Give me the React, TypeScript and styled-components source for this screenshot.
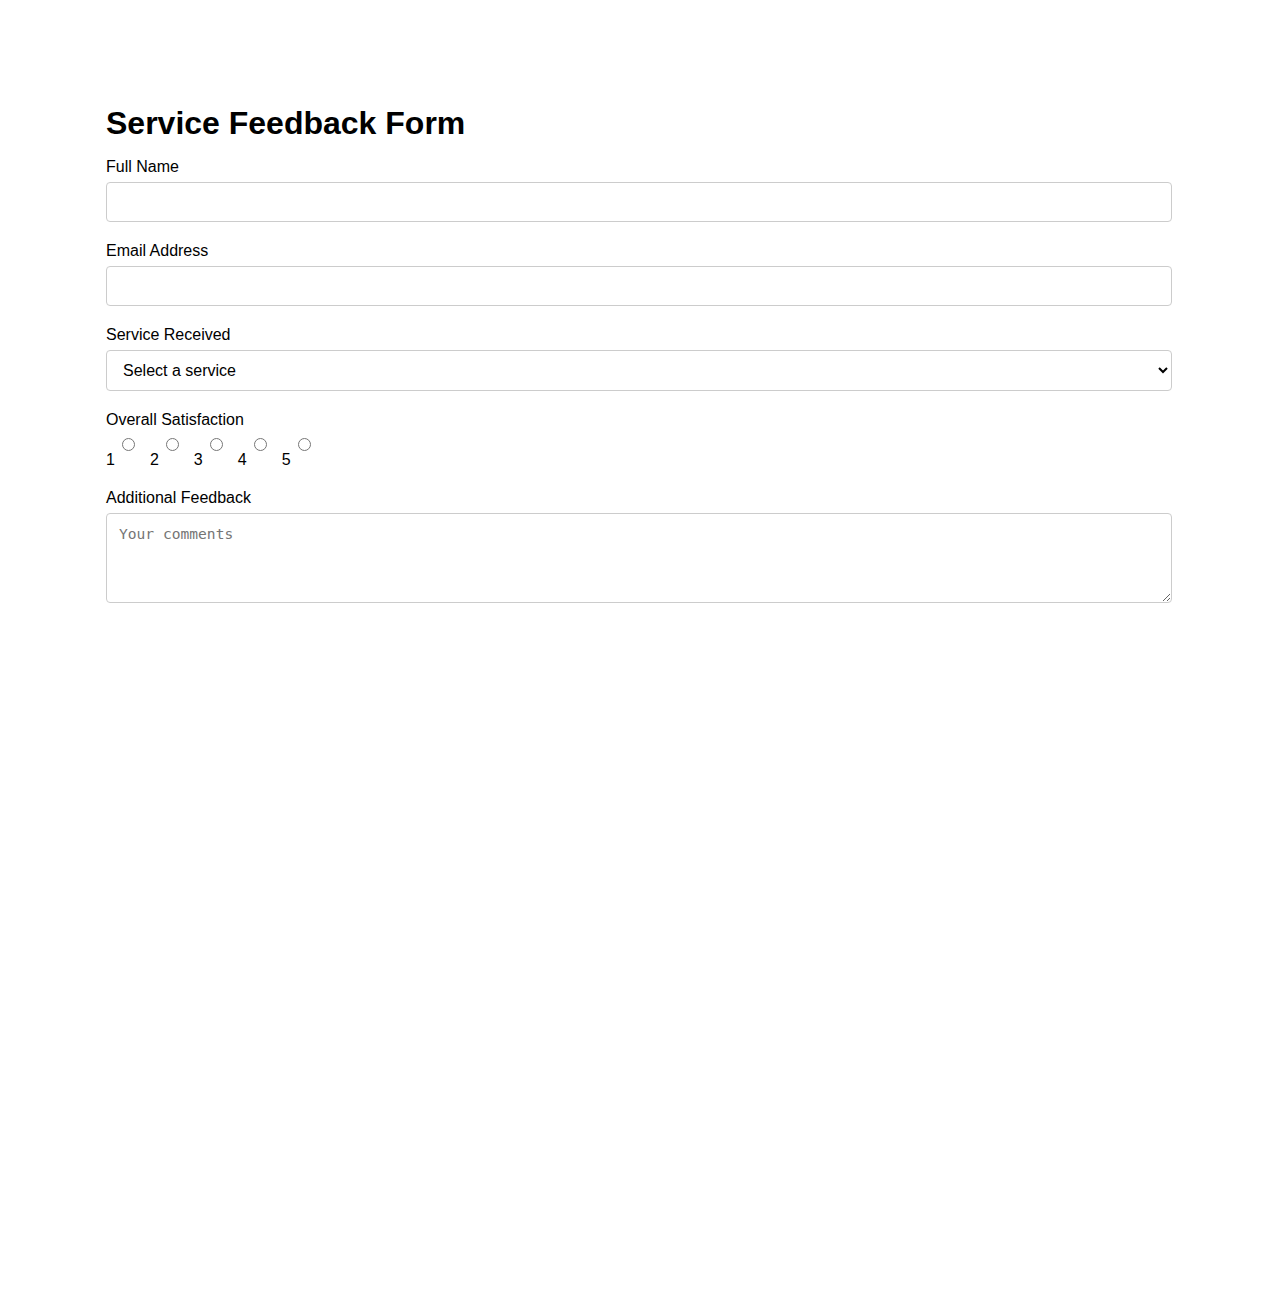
import React, { useState } from "react";
import styled, { createGlobalStyle } from "styled-components";

const GlobalStyle = createGlobalStyle`
    body {
        margin: 0;
        background: #fff;
        color: #000;
        font-family: "Liberation Sans", Arial, sans-serif;
    }
`;

const services = ["Consultation", "Installation", "Maintenance", "Repair", "Support"];

const FeedbackForm = () => {
    const [rating, setRating] = useState<number | null>(null);

    return (
        <Wrapper>
            <GlobalStyle />
            <Title>Service Feedback Form</Title>
            <form onSubmit={(e) => e.preventDefault()}>
                <Field>
                    <Label htmlFor="fullName">Full Name</Label>
                    <TextInput id="fullName" type="text" />
                </Field>
                <Field>
                    <Label htmlFor="email">Email Address</Label>
                    <TextInput id="email" type="email" />
                </Field>
                <Field>
                    <Label htmlFor="service">Service Received</Label>
                    <Select id="service" defaultValue="">
                        <option value="">Select a service</option>
                        {services.map((s) => (
                            <option key={s} value={s}>{s}</option>
                        ))}
                    </Select>
                </Field>
                <Field>
                    <Label as="span">Overall Satisfaction</Label>
                    <RatingRow>
                        {[1, 2, 3, 4, 5].map((n) => (
                            <RatingOption key={n}>
                                <RatingText>{n}</RatingText>
                                <Radio
                                    type="radio"
                                    name="satisfaction"
                                    value={n}
                                    checked={rating === n}
                                    onChange={() => setRating(n)}
                                />
                            </RatingOption>
                        ))}
                    </RatingRow>
                </Field>
                <Field>
                    <Label htmlFor="comments">Additional Feedback</Label>
                    <TextArea id="comments" placeholder="Your comments" />
                </Field>
            </form>
        </Wrapper>
    );
};

const Wrapper = styled.div`
    max-width: 1066px;
    margin: 0 auto;
    padding-top: 105px;
`;

const Title = styled.h1`
    font-size: 32px;
    font-weight: bold;
    margin: 0 0 16px;
`;

const Field = styled.div`
    margin-bottom: 20px;
`;

const Label = styled.label`
    display: block;
    font-size: 16px;
    line-height: 18px;
    margin-bottom: 6px;
`;

const TextInput = styled.input`
    display: block;
    width: 100%;
    box-sizing: border-box;
    height: 40px;
    padding: 10px;
    font-size: 16px;
    font-family: "Liberation Sans", Arial, sans-serif;
    border: 1px solid #ccc;
    border-radius: 4px;
`;

const Select = styled.select`
    display: block;
    width: 100%;
    box-sizing: border-box;
    height: 41px;
    padding: 10px 8px 10px 12px;
    font-size: 16px;
    font-family: "Liberation Sans", Arial, sans-serif;
    color: #000;
    background: #fff;
    border: 1px solid #ccc;
    border-radius: 4px;
`;

const RatingRow = styled.div`
    display: flex;
    align-items: flex-start;
    height: 34px;
`;

const RatingOption = styled.label`
    display: flex;
    align-items: flex-start;
    margin-right: 12px;
    font-size: 16px;
`;

const RatingText = styled.span`
    padding-top: 16px;
    line-height: 18px;
`;

const Radio = styled.input`
    width: 13px;
    height: 13px;
    margin: 3px 3px 0 7px;
`;

const TextArea = styled.textarea`
    display: block;
    width: 100%;
    box-sizing: border-box;
    height: 90px;
    padding: 11px 12px;
    font-family: "DejaVu Sans Mono", monospace;
    font-size: 14.6px;
    border: 1px solid #ccc;
    border-radius: 4px;

    &::placeholder {
        color: #757575;
    }
`;

export default function App() {
    return <FeedbackForm />;
}
